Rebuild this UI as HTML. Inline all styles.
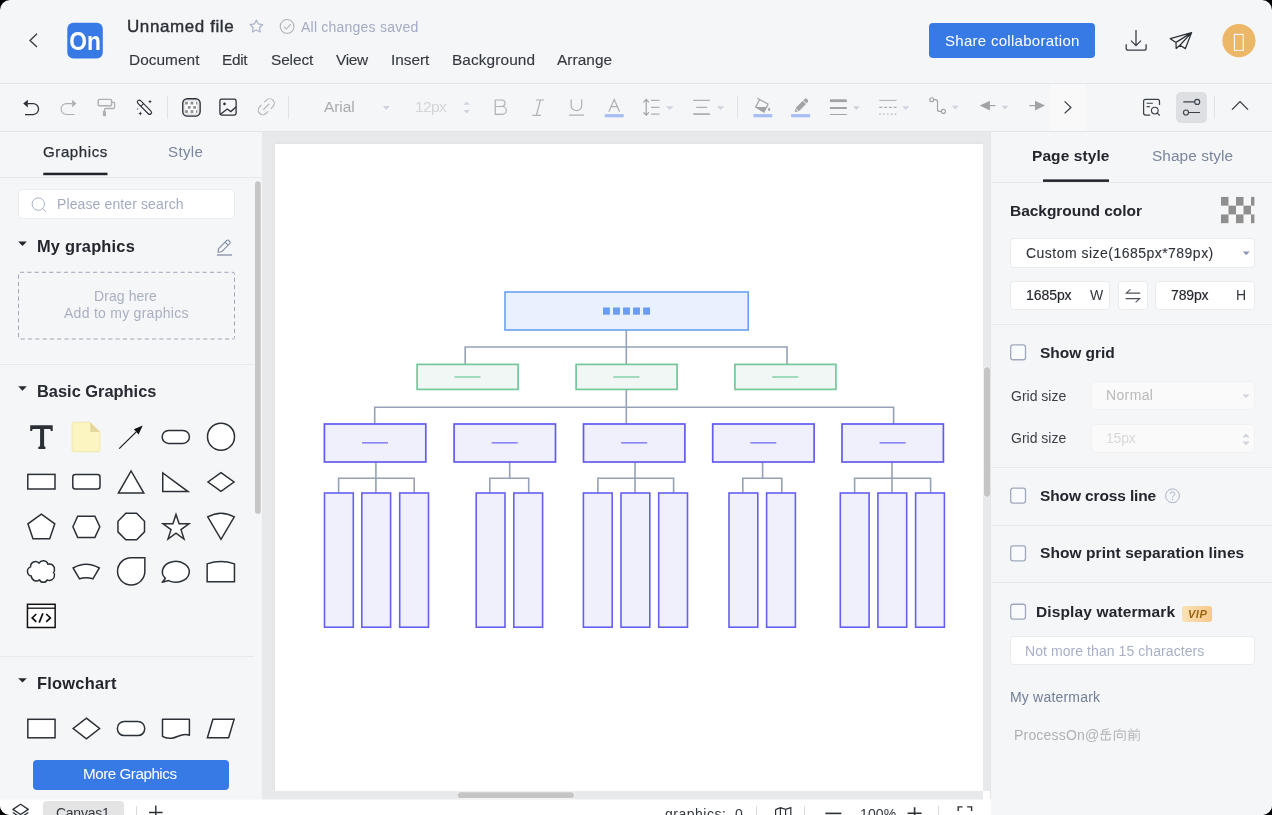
<!DOCTYPE html>
<html>
<head>
<meta charset="utf-8">
<title>Unnamed file</title>
<style>
*{box-sizing:border-box;margin:0;padding:0}
html,body{width:1272px;height:815px;overflow:hidden;background:#000;}
body{font-family:"Liberation Sans",sans-serif;color:#2b2f36;}
#app{position:absolute;left:0;top:0;width:1272px;height:815px;background:#f5f6f8;border-radius:10px;overflow:hidden;}
.a{position:absolute}
.t{position:absolute;white-space:pre;line-height:1;will-change:transform;}
svg{position:absolute;left:0;top:0;overflow:visible;pointer-events:none;will-change:transform}
.hr{position:absolute;height:1px;background:#e7e9ec}
.vr{position:absolute;width:1px;background:#e0e2e5}
.box{position:absolute;background:#fff;border:1px solid #e9ebef;border-radius:4px}
.cb{position:absolute;width:16px;height:16px;border:1px solid #98a2bc;border-radius:3px;background:#f9fafc}

</style>
</head>
<body>
<div id="app">
<!--HEADER--><div class="hr" style="left:0;top:83px;width:1272px;background:#e3e5e9"></div><svg width="1272" height="84"><rect x="67.3" y="22.8" width="35.5" height="35.6" rx="6" fill="#377ae6"/><text x="69.2" y="49.9" font-family="Liberation Sans" font-weight="700" font-size="26" fill="#fff" textLength="31.6" lengthAdjust="spacingAndGlyphs">On</text><path d="M37,33.8 L30,40.4 L37,47" fill="none" stroke="#3a3d44" stroke-width="1.35"/><path d="M256.35,20.20 L258.32,23.99 L262.53,24.69 L259.54,27.74 L260.17,31.96 L256.35,30.05 L252.53,31.96 L253.16,27.74 L250.17,24.69 L254.38,23.99 Z" fill="none" stroke="#aab3cc" stroke-width="1.25" stroke-linejoin="round"/><circle cx="287.1" cy="26.4" r="6.9" fill="none" stroke="#b0b1b5" stroke-width="1.05"/><path d="M283.9,26.6 L286.3,29.0 L290.8,24.2" fill="none" stroke="#b0b1b5" stroke-width="1.05"/><path d="M1136,30.1 V45.4 M1131,40.6 L1136,45.6 L1141,40.6" fill="none" stroke="#3a4048" stroke-width="1.3"/><path d="M1126.2,44.2 V48.2 a2,2 0 0 0 2,2 H1144.1 a2,2 0 0 0 2,-2 V44.2" fill="none" stroke="#3a4048" stroke-width="1.3"/><path d="M1191.6,32.6 L1170.3,38.7 L1176,42.4 L1176.2,48.5 L1179.9,45.2 L1185.4,48.6 Z M1176,42.4 L1191.6,32.6 L1179.9,45.2" fill="none" stroke="#2b2f36" stroke-width="1.25" stroke-linejoin="round"/><circle cx="1238.9" cy="40.6" r="16.6" fill="#ecb867"/><rect x="1234.4" y="34.4" width="8.8" height="16" fill="none" stroke="#fff" stroke-width="1"/></svg><div class="t" style="left:126.60px;top:18.21px;font-size:17px;letter-spacing:0.590px;color:#2b2f36;font-weight:400;font-style:normal;-webkit-text-stroke:0.4px #2b2f36;">Unnamed file</div><div class="t" style="left:301.00px;top:20.25px;font-size:14px;letter-spacing:0.222px;color:#a3abc3;font-weight:400;font-style:normal;">All changes saved</div><div class="t" style="left:128.70px;top:51.56px;font-size:15.4px;letter-spacing:0.047px;color:#33373e;font-weight:400;font-style:normal;-webkit-text-stroke:0.12px #33373e;">Document</div><div class="t" style="left:221.90px;top:51.56px;font-size:15.4px;letter-spacing:-0.315px;color:#33373e;font-weight:400;font-style:normal;-webkit-text-stroke:0.12px #33373e;">Edit</div><div class="t" style="left:271.00px;top:51.56px;font-size:15.4px;letter-spacing:-0.100px;color:#33373e;font-weight:400;font-style:normal;-webkit-text-stroke:0.12px #33373e;">Select</div><div class="t" style="left:336.00px;top:51.56px;font-size:15.4px;letter-spacing:-0.322px;color:#33373e;font-weight:400;font-style:normal;-webkit-text-stroke:0.12px #33373e;">View</div><div class="t" style="left:391.00px;top:51.56px;font-size:15.4px;letter-spacing:-0.043px;color:#33373e;font-weight:400;font-style:normal;-webkit-text-stroke:0.12px #33373e;">Insert</div><div class="t" style="left:452.00px;top:51.56px;font-size:15.4px;letter-spacing:0.102px;color:#33373e;font-weight:400;font-style:normal;-webkit-text-stroke:0.12px #33373e;">Background</div><div class="t" style="left:557.00px;top:51.56px;font-size:15.4px;letter-spacing:0.051px;color:#33373e;font-weight:400;font-style:normal;-webkit-text-stroke:0.12px #33373e;">Arrange</div><div class="a" style="left:929.2px;top:23px;width:165.4px;height:35.3px;border-radius:4px;background:#377ae6"></div><div class="t" style="left:945.00px;top:32.90px;font-size:15px;letter-spacing:0.283px;color:#fff;font-weight:400;font-style:normal;">Share collaboration</div><!--TOOLBAR--><div class="a" style="left:1050px;top:84px;width:35.7px;height:47px;background:#f9f9fa"></div><div class="hr" style="left:0;top:131px;width:1272px;background:#e3e5e9"></div><div class="vr" style="left:166.6px;top:96px;height:23px"></div><div class="vr" style="left:288px;top:96px;height:23px"></div><div class="vr" style="left:737px;top:96px;height:23px"></div><div class="vr" style="left:1213.8px;top:96px;height:23px"></div><div class="a" style="left:1176.4px;top:92px;width:30.5px;height:30.8px;border-radius:5px;background:#dedfe3"></div><svg width="1272" height="132"><path d="M27.4,103.6 H33.1 a5.45,5.45 0 0 1 0,10.9 H25" fill="none" stroke="#2b2f36" stroke-width="1.25"/><path d="M23.2,103.6 L27.8,99.7 V107.5 Z" fill="#2b2f36"/><path d="M72.6,103.6 H66.5 a5.45,5.45 0 0 0 0,10.9 H74.6" fill="none" stroke="#afb0b2" stroke-width="1.15"/><path d="M76.4,103.6 L72.2,99.7 V107.5 Z" fill="#afb0b2"/><rect x="98.2" y="99.4" width="13.4" height="6.3" rx="1" fill="none" stroke="#afb0b2" stroke-width="1.4"/><path d="M111.6,102.4 H113.4 a1.2,1.2 0 0 1 1.2,1.2 V107 a1.5,1.5 0 0 1 -1.5,1.5 H105.8 a1.4,1.4 0 0 0 -1.4,1.4 V111" fill="none" stroke="#afb0b2" stroke-width="1.3"/><rect x="102.9" y="111" width="3.1" height="5.2" rx="0.6" fill="#afb0b2"/><g transform="rotate(45 144.7 107.4)"><rect x="135.2" y="105.55" width="18.4" height="3.8" rx="1.9" fill="none" stroke="#2b2f36" stroke-width="1.15"/><path d="M141.2,105.55 V109.35" stroke="#2b2f36" stroke-width="1.1"/></g><path d="M150,99.69999999999999 L150.532,101.068 L151.9,101.6 L150.532,102.13199999999999 L150,103.5 L149.468,102.13199999999999 L148.1,101.6 L149.468,101.068 Z" fill="#2b2f36"/><path d="M140.3,111.3 L140.91600000000003,112.884 L142.5,113.5 L140.91600000000003,114.116 L140.3,115.7 L139.684,114.116 L138.10000000000002,113.5 L139.684,112.884 Z" fill="#2b2f36"/><path d="M137.5,108.0 L137.78,108.72 L138.5,109.0 L137.78,109.28 L137.5,110.0 L137.22,109.28 L136.5,109.0 L137.22,108.72 Z" fill="#2b2f36"/><rect x="182.75" y="98.75" width="17.4" height="17.4" rx="4.6" fill="#e3e4e7"/><rect x="185.2" y="101.4" width="11.9" height="11.9" fill="#fbfbfb"/><rect x="185.20" y="101.8" width="2.70" height="2.7" fill="#8e8e8e"/><rect x="190.60" y="101.8" width="2.70" height="2.7" fill="#8e8e8e"/><rect x="196.00" y="101.8" width="1.10" height="2.7" fill="#8e8e8e"/><rect x="187.90" y="106.0" width="2.70" height="2.7" fill="#8e8e8e"/><rect x="193.30" y="106.0" width="2.70" height="2.7" fill="#8e8e8e"/><rect x="185.20" y="110.2" width="2.70" height="2.7" fill="#8e8e8e"/><rect x="190.60" y="110.2" width="2.70" height="2.7" fill="#8e8e8e"/><rect x="196.00" y="110.2" width="1.10" height="2.7" fill="#8e8e8e"/><rect x="182.75" y="98.75" width="17.4" height="17.4" rx="4.6" fill="none" stroke="#2b2f36" stroke-width="1.35"/><rect x="219.9" y="99.2" width="16.2" height="15.9" rx="1.8" fill="none" stroke="#2b2f36" stroke-width="1.3"/><circle cx="224.5" cy="103.9" r="1.3" fill="#2b2f36"/><path d="M220.2,114.6 L227.2,109 L230.8,111.6 L236,107" fill="none" stroke="#2b2f36" stroke-width="1.3"/><g transform="translate(266.25 106.75) rotate(-45)" fill="none" stroke="#afb0b2" stroke-width="1.15" stroke-linecap="round"><path d="M2.4,-4.6 H4.8 A4.6,4.6 0 0 1 4.8,4.6 H2.4"/><path d="M-2.4,-4.6 H-4.8 A4.6,4.6 0 0 0 -4.8,4.6 H-2.4"/><path d="M-3.8,0 H3.8"/></g><path d="M495.2,100 V114.3 H502.4 a3.9,3.9 0 0 0 0,-7.8 H495.2 M495.2,100 H501.8 a3.25,3.25 0 0 1 0,6.5" fill="none" stroke="#afb0b2" stroke-width="1.2"/><path d="M536,100 H544.2 M532.4,115.3 H540.8 M540.4,100 L536.4,115.3" fill="none" stroke="#afb0b2" stroke-width="1.2"/><path d="M571.1,99.4 V105.4 a5.3,5.3 0 0 0 10.6,0 V99.4 M568.9,115.1 H583.9" fill="none" stroke="#afb0b2" stroke-width="1.2"/><path d="M608.8,111.8 L614.2,99.5 L619.6,111.8 M611.1,106.6 H617.3" fill="none" stroke="#afb0b2" stroke-width="1.2"/><rect x="604.7" y="114.1" width="19" height="3.2" fill="#a9bdf5"/><path d="M646.2,99.6 V115 M643.5,102.3 L646.2,99.4 L648.9,102.3 M643.5,112.3 L646.2,115.2 L648.9,112.3" fill="none" stroke="#a2a3a5" stroke-width="1.2"/><path d="M651,100.4 H659.5 M651,107.4 H659.5 M651,114.1 H659.5" stroke="#afb0b2" stroke-width="1.4"/><path d="M666,106.3 H673.4 L669.7,110 Z" fill="#d0d3dd"/><path d="M693.2,100.4 H709.9 M696.2,107.4 H707.2" stroke="#afb0b2" stroke-width="1.2"/><path d="M693.2,114.1 H709.9" stroke="#afb0b2" stroke-width="1.8"/><path d="M716.8,106.3 H724.2 L720.5,110 Z" fill="#d0d3dd"/><path d="M757.3,98.2 L768.4,104.3 M759.6,99.7 L755.6,107.1 L763.8,112.1 L768.1,104.4" fill="none" stroke="#a2a3a5" stroke-width="1.2" stroke-linejoin="round"/><path d="M755.4,107 H766.7 L763.9,112.4 Z" fill="#a2a3a5"/><path d="M769.1,107.3 q1.3,1.7 1.15,2.5 a1.15,1.15 0 0 1 -2.3,0 q-0.1,-0.8 1.15,-2.5 Z" fill="#a2a3a5"/><rect x="753.3" y="114.1" width="19" height="3.2" fill="#a9bdf5"/><g transform="translate(794.8 112) rotate(-45)" fill="#a2a3a5"><path d="M0,0 L2.7,-1.9 V1.9 Z"/><rect x="3.5" y="-2.3" width="10" height="4.6"/><path d="M14.3,-2.3 H15.6 a2.3,2.3 0 0 1 0,4.6 H14.3 Z"/></g><rect x="791.1" y="114.1" width="19" height="3.2" fill="#a9bdf5"/><rect x="829.9" y="99.3" width="16.9" height="2.8" fill="#a2a3a5"/><rect x="829.9" y="107" width="16.9" height="2" fill="#a2a3a5"/><rect x="829.9" y="114" width="16.9" height="1" fill="#a2a3a5"/><path d="M852.9,106.3 H859.8 L856.3499999999999,110 Z" fill="#d0d3dd"/><path d="M879.3,100.4 H896.6" stroke="#afb0b2" stroke-width="1"/><path d="M879.3,107.4 H896.6" stroke="#afb0b2" stroke-width="1.2" stroke-dasharray="3,1.8"/><path d="M879.3,114.1 H896.6" stroke="#afb0b2" stroke-width="1.2" stroke-dasharray="1.4,2.5"/><path d="M902.3,106.3 H909.3 L905.8,110 Z" fill="#d0d3dd"/><circle cx="931.7" cy="99.7" r="2" fill="none" stroke="#a2a3a5" stroke-width="1.1"/><circle cx="943.4" cy="111.4" r="2" fill="none" stroke="#a2a3a5" stroke-width="1.1"/><path d="M933.7,99.7 H935.5 a2,2 0 0 1 2,2 V109.4 a2,2 0 0 0 2,2 H941.4" fill="none" stroke="#a2a3a5" stroke-width="1.2"/><path d="M951.8,105.8 H958.8 L955.3,109.4 Z" fill="#d0d3dd"/><path d="M979.8,105.6 L989.9,100.7 V110.5 Z" fill="#a2a3a5"/><path d="M989,105.6 H995.5" stroke="#a2a3a5" stroke-width="1.2"/><path d="M1001.6,105.8 H1008.2 L1004.9000000000001,109.4 Z" fill="#d0d3dd"/><path d="M1045,105.6 L1035,100.7 V110.5 Z" fill="#a2a3a5"/><path d="M1029.2,105.6 H1036" stroke="#a2a3a5" stroke-width="1.2"/><path d="M1064.6,101.4 L1070.9,107.4 L1064.6,113.4" fill="none" stroke="#33373e" stroke-width="1.25"/><path d="M1150.2,115 H1145.6 a2,2 0 0 1 -2,-2 V101.3 a2,2 0 0 1 2,-2 H1157.5 a2,2 0 0 1 2,2 V105" fill="none" stroke="#3a4048" stroke-width="1.25"/><path d="M1146.6,103.3 H1152.8 M1146.6,106.6 H1149.8" stroke="#3a4048" stroke-width="1.1"/><circle cx="1154.8" cy="110.6" r="3.35" fill="none" stroke="#3a4048" stroke-width="1.15"/><path d="M1157.3,113.1 L1159.7,115.5" stroke="#3a4048" stroke-width="1.2"/><path d="M1183.3,101.9 H1194.6 M1188.6,112.5 H1200" stroke="#3a4048" stroke-width="1.15"/><circle cx="1197.2" cy="101.9" r="2.5" fill="none" stroke="#3a4048" stroke-width="1.15"/><circle cx="1186" cy="112.5" r="2.5" fill="none" stroke="#3a4048" stroke-width="1.15"/><path d="M1232,109.6 L1240,101.6 L1248,109.6" fill="none" stroke="#33373e" stroke-width="1.25"/><path d="M382.9,106 H389.8 L386.35,110 Z" fill="#d0d3dd"/><path d="M463.5,104.7 H469.8 L466.65,101.4 Z M463.5,110 H469.8 L466.65,113.4 Z" fill="#d0d3dd"/></svg><div class="t" style="left:323.90px;top:98.98px;font-size:15.5px;letter-spacing:-0.091px;color:#aaabad;font-weight:400;font-style:normal;">Arial</div><div class="t" style="left:414.60px;top:98.98px;font-size:15.5px;letter-spacing:-0.620px;color:#d3d5d9;font-weight:400;font-style:normal;">12px</div><!--LEFT--><div class="t" style="left:43.30px;top:143.90px;font-size:15px;letter-spacing:0.611px;color:#2b2f36;font-weight:400;font-style:normal;-webkit-text-stroke:0.25px #2b2f36;">Graphics</div><div class="t" style="left:168.20px;top:143.90px;font-size:15px;letter-spacing:0.374px;color:#7a869c;font-weight:400;font-style:normal;">Style</div><svg width="262" height="200"><rect x="43.3" y="172.7" width="64.2" height="2.5" fill="#20232a"/></svg><div class="hr" style="left:0;top:177px;width:262px"></div><svg width="262" height="815"><rect x="254.4" y="180.6" width="7" height="333.8" rx="3.5" fill="#f9f9fa"/><rect x="255" y="181.2" width="5.8" height="332.6" rx="2.9" fill="#c5c5c5"/></svg><div class="box" style="left:18.4px;top:189px;width:216.2px;height:30.4px"></div><div class="t" style="left:56.50px;top:196.85px;font-size:14px;letter-spacing:0.115px;color:#a3abc1;font-weight:400;font-style:normal;">Please enter search</div><div class="t" style="left:36.60px;top:237.62px;font-size:16.4px;letter-spacing:0.218px;color:#23262d;font-weight:700;font-style:normal;">My graphics</div><div class="t" style="left:36.60px;top:383.02px;font-size:16.4px;letter-spacing:0.005px;color:#262a31;font-weight:700;font-style:normal;">Basic Graphics</div><div class="t" style="left:37.30px;top:675.22px;font-size:16.4px;letter-spacing:0.256px;color:#23262d;font-weight:700;font-style:normal;">Flowchart</div><svg width="262" height="400"><rect x="18.5" y="272.3" width="216" height="66.7" rx="1.5" fill="none" stroke="#9ea7ba" stroke-width="1" stroke-dasharray="4.2,3.1"/></svg><div class="t" style="left:94.40px;top:288.95px;font-size:14px;letter-spacing:0.079px;color:#a9afc1;font-weight:400;font-style:normal;">Drag here</div><div class="t" style="left:64.20px;top:306.35px;font-size:14px;letter-spacing:0.269px;color:#a9afc1;font-weight:400;font-style:normal;">Add to my graphics</div><div class="hr" style="left:0;top:364px;width:254px"></div><div class="hr" style="left:0;top:656px;width:254px"></div><div class="a" style="left:32.6px;top:759.6px;width:196px;height:30.2px;border-radius:4px;background:#377ae6"></div><div class="t" style="left:82.80px;top:766.33px;font-size:15.2px;letter-spacing:-0.467px;color:#fff;font-weight:400;font-style:normal;">More Graphics</div><svg width="262" height="815"><circle cx="38.3" cy="204.1" r="6.2" fill="none" stroke="#a9b1c8" stroke-width="1"/><path d="M42.8,208.6 L45.8,211.7" stroke="#a9b1c8" stroke-width="1"/><path d="M18.2,241.5 H26.8 L22.5,245.9 Z" fill="#23262d"/><path d="M18.2,386.3 H26.8 L22.5,390.7 Z" fill="#262a31"/><path d="M18.2,678.2 H26.8 L22.5,682.6 Z" fill="#23262d"/><g transform="translate(218.0 252.3) rotate(-45)" fill="none" stroke="#7b879f" stroke-width="1.05" stroke-linejoin="round"><path d="M0,0 L2.8,-2.15 H14.6 a1.3,1.3 0 0 1 1.3,1.3 V0.85 a1.3,1.3 0 0 1 -1.3,1.3 H2.8 Z M12.2,-2.15 V2.15"/></g><path d="M216.9,255 H232.1" stroke="#7b879f" stroke-width="1.2"/><path d="M30.2,425.2 H52.7 V430.9 H50.8 L50.3,428.9 H44.1 V445.4 Q44.3,446.7 45.4,447.1 V448.9 H38.3 V447.1 Q39.9,446.7 40.1,445.4 V428.9 H32.6 L32.1,430.9 H30.2 Z" fill="#2b2f36"/><path d="M73.7,422.3 H90.2 L99.9,432 V450.2 a1.5,1.5 0 0 1 -1.5,1.5 H73.7 a1.5,1.5 0 0 1 -1.5,-1.5 V423.8 a1.5,1.5 0 0 1 1.5,-1.5 Z" fill="#fdf5c1" stroke="#f0e5a4" stroke-width="0.9"/><path d="M90.2,422.3 L99.9,432 H90.2 Z" fill="#e4d79d"/><path d="M119.2,448.7 L136.5,431.7" stroke="#111" stroke-width="1.1"/><path d="M142.7,425.6 L138.6,434.6 L133.9,429.3 Z" fill="#111"/><rect x="162.2" y="430.4" width="27.2" height="13" rx="6.5" fill="#fff" stroke="#2b2f36" stroke-width="1.5" stroke-linejoin="miter"/><circle cx="221" cy="436.7" r="13.5" fill="#fff" stroke="#2b2f36" stroke-width="1.5" stroke-linejoin="miter"/><rect x="27.8" y="474.4" width="27.2" height="14.6" fill="#fff" stroke="#2b2f36" stroke-width="1.5" stroke-linejoin="miter"/><rect x="72.8" y="474.4" width="27.2" height="14.6" rx="2.5" fill="#fff" stroke="#2b2f36" stroke-width="1.5" stroke-linejoin="miter"/><path d="M131.1,471.0 L143.8,493.1 H118.4 Z" fill="#fff" stroke="#2b2f36" stroke-width="1.5" stroke-linejoin="miter"/><path d="M162.75,473.0 V491.6 H188.0 Z" fill="#fff" stroke="#2b2f36" stroke-width="1.5" stroke-linejoin="miter"/><path d="M221,472.7 L234.0,482 L221,491.3 L208.0,482 Z" fill="#fff" stroke="#2b2f36" stroke-width="1.5" stroke-linejoin="miter"/><path d="M41.35,514.1 L54.8,523.85 L49.7,538.85 H33.0 L27.9,523.85 Z" fill="#fff" stroke="#2b2f36" stroke-width="1.5" stroke-linejoin="miter"/><path d="M72.9,526.8 L77.7,516.3 H94.9 L99.8,526.8 L94.9,537.4 H77.7 Z" fill="#fff" stroke="#2b2f36" stroke-width="1.5" stroke-linejoin="miter"/><path d="M125.8,513.3 H136.6 L144.5,521.2 V531.9 L136.6,539.7 H125.8 L117.95,531.9 V521.2 Z" fill="#fff" stroke="#2b2f36" stroke-width="1.5" stroke-linejoin="miter"/><path d="M176.00,514.40 L179.09,523.75 L188.93,523.80 L180.99,529.62 L183.99,539.00 L176.00,533.25 L168.01,539.00 L171.01,529.62 L163.07,523.80 L172.91,523.75 Z" fill="#fff" stroke="#2b2f36" stroke-width="1.5" stroke-linejoin="miter"/><path d="M207.7,516.9 Q221,509.4 234.3,516.9 L221,539.3 Z" fill="#fff" stroke="#2b2f36" stroke-width="1.5" stroke-linejoin="miter"/><path d="M30.6,566.9 A4.9,4.9 0 0 1 39.1,563.2 A4.85,4.85 0 0 1 47.95,564.2 A5,5 0 0 1 54.4,569.7 A2.8,2.8 0 0 1 53.5,572.5 A2.8,2.8 0 0 1 54.4,575.4 A4.95,4.95 0 0 1 47.2,579.9 A4.25,4.25 0 0 1 39.5,579.9 A5.05,5.05 0 0 1 31.3,576.1 A4.8,4.8 0 0 1 30.6,566.9 Z" fill="#fff" stroke="#2b2f36" stroke-width="1.5" stroke-linejoin="round"/><path d="M73.1,568.0 Q86.2,560.3 99.3,568.0 L92.9,578.8 Q86.2,576.5 79.5,578.8 Z" fill="#fff" stroke="#2b2f36" stroke-width="1.5" stroke-linejoin="miter"/><path d="M131.2,557.65 H144.85 V571.3 a13.65,13.65 0 1 1 -13.65,-13.65 Z" fill="#fff" stroke="#2b2f36" stroke-width="1.5" stroke-linejoin="miter"/><path d="M165.4,578.4 A13.45,10.4 0 1 1 168.6,580.6 L162.2,582.2 Z" fill="#fff" stroke="#2b2f36" stroke-width="1.5" stroke-linejoin="round"/><path d="M207.15,563.9 Q220.8,559 234.45,563.9 V581.7 H207.15 Z" fill="#fff" stroke="#2b2f36" stroke-width="1.5" stroke-linejoin="miter"/><rect x="27.45" y="604.3" width="27.7" height="23.2" fill="#fff" stroke="#111" stroke-width="1.5"/><path d="M27.5,608.2 H55" stroke="#111" stroke-width="1.3"/><path d="M36.3,614.0 L32.2,617.9 L36.3,621.8 M46.2,614.0 L50.4,617.9 L46.2,621.8 M42.9,613.4 L39.2,622.6" fill="none" stroke="#111" stroke-width="1.7"/><rect x="27.85" y="719.3" width="27.2" height="18.5" fill="#fff" stroke="#2b2f36" stroke-width="1.5" stroke-linejoin="miter"/><path d="M86.4,718.1 L99.6,728.5 L86.4,738.9 L73.2,728.5 Z" fill="#fff" stroke="#2b2f36" stroke-width="1.5" stroke-linejoin="miter"/><rect x="117.4" y="721.6" width="27.3" height="14" rx="6.8" fill="#fff" stroke="#2b2f36" stroke-width="1.5" stroke-linejoin="miter"/><path d="M162.5,719.3 H189.4 V735.2 C182,732.2 178,737.6 171.5,738.2 C167,738.6 164,737.4 162.5,736.4 Z" fill="#fff" stroke="#2b2f36" stroke-width="1.5" stroke-linejoin="round"/><path d="M212.9,719.35 H234.1 L228.6,737.7 H207.4 Z" fill="#fff" stroke="#2b2f36" stroke-width="1.5" stroke-linejoin="miter"/></svg><!--CANVAS--><div class="a" style="left:262px;top:132px;width:728px;height:667px;background:#e8e9eb"></div><div class="a" style="left:275px;top:144px;width:708px;height:647px;background:#fff;box-shadow:0 0 5px rgba(0,0,0,0.05)"></div><div class="a" style="left:983px;top:132px;width:7px;height:659px;background:#e8e9eb"></div><div class="a" style="left:262px;top:791px;width:721px;height:8px;background:#e8e9eb"></div><div class="a" style="left:983px;top:791px;width:8px;height:8px;background:#fff"></div><svg width="1272" height="815"><rect x="983.4" y="366.6" width="7.1" height="130.8" rx="3.55" fill="#f6f6f6"/><rect x="984" y="367.3" width="6" height="129.4" rx="3" fill="#c5c5c5"/></svg><svg width="1272" height="815"><rect x="456.8" y="791.5" width="118" height="7.3" rx="3.65" fill="#f6f6f6"/><rect x="457.6" y="792.3" width="116.4" height="5.8" rx="2.9" fill="#c5c5c5"/></svg><svg width="1272" height="815"><g fill="none" stroke="#95a1b5" stroke-width="1.6"><path d="M626.3,330 V347 M465.2,364 V347 H787 V364 M626.3,347 V364"/><path d="M626.3,389.5 V424 M374.7,424 V407.3 H893.6 V424"/><path d="M375.9,462 V493 M338.6,493 V478.3 H414.2 V493"/><path d="M509.7,462 V478.3 M489.8,493 V478.3 H528.7 V493"/><path d="M635,462 V493 M597.9,493 V478.3 H673.6 V493"/><path d="M762.6,462 V478.3 M742.8,493 V478.3 H781.8 V493"/><path d="M892,462 V493 M854.6,493 V478.3 H930.6 V493"/></g><rect x="505" y="292" width="243.2" height="38" fill="#e9f0fe" stroke="#6aa0f2" stroke-width="1.6"/><rect x="603.00" y="307.5" width="6.9" height="7.2" fill="#6b9cf3"/><rect x="613.03" y="307.5" width="6.9" height="7.2" fill="#6b9cf3"/><rect x="623.06" y="307.5" width="6.9" height="7.2" fill="#6b9cf3"/><rect x="633.09" y="307.5" width="6.9" height="7.2" fill="#6b9cf3"/><rect x="643.12" y="307.5" width="6.9" height="7.2" fill="#6b9cf3"/><rect x="417.1" y="364.4" width="101" height="25" fill="#f1f7f5" stroke="#74c79b" stroke-width="1.7"/><path d="M454.40000000000003,377 H480.5" stroke="#86d0a8" stroke-width="1.5"/><rect x="576.1" y="364.4" width="101" height="25" fill="#f1f7f5" stroke="#74c79b" stroke-width="1.7"/><path d="M613.4,377 H639.5" stroke="#86d0a8" stroke-width="1.5"/><rect x="734.9" y="364.4" width="101" height="25" fill="#f1f7f5" stroke="#74c79b" stroke-width="1.7"/><path d="M772.1999999999999,377 H798.3" stroke="#86d0a8" stroke-width="1.5"/><rect x="324.4" y="424" width="101.4" height="38" fill="#f0f0fd" stroke="#635bf0" stroke-width="1.7"/><path d="M362.0,442.8 H388.0" stroke="#8a84f5" stroke-width="1.6"/><rect x="454.1" y="424" width="101.4" height="38" fill="#f0f0fd" stroke="#635bf0" stroke-width="1.7"/><path d="M491.70000000000005,442.8 H517.7" stroke="#8a84f5" stroke-width="1.6"/><rect x="583.5" y="424" width="101.4" height="38" fill="#f0f0fd" stroke="#635bf0" stroke-width="1.7"/><path d="M621.1,442.8 H647.1" stroke="#8a84f5" stroke-width="1.6"/><rect x="712.7" y="424" width="101.4" height="38" fill="#f0f0fd" stroke="#635bf0" stroke-width="1.7"/><path d="M750.3000000000001,442.8 H776.3000000000001" stroke="#8a84f5" stroke-width="1.6"/><rect x="842" y="424" width="101.4" height="38" fill="#f0f0fd" stroke="#635bf0" stroke-width="1.7"/><path d="M879.6,442.8 H905.6" stroke="#8a84f5" stroke-width="1.6"/><rect x="324.5" y="493" width="28.8" height="134.2" fill="#f0f0fd" stroke="#665ff2" stroke-width="1.6"/><rect x="361.8" y="493" width="28.8" height="134.2" fill="#f0f0fd" stroke="#665ff2" stroke-width="1.6"/><rect x="399.7" y="493" width="28.8" height="134.2" fill="#f0f0fd" stroke="#665ff2" stroke-width="1.6"/><rect x="476.2" y="493" width="28.8" height="134.2" fill="#f0f0fd" stroke="#665ff2" stroke-width="1.6"/><rect x="513.8000000000001" y="493" width="28.8" height="134.2" fill="#f0f0fd" stroke="#665ff2" stroke-width="1.6"/><rect x="583.4000000000001" y="493" width="28.8" height="134.2" fill="#f0f0fd" stroke="#665ff2" stroke-width="1.6"/><rect x="621.0" y="493" width="28.8" height="134.2" fill="#f0f0fd" stroke="#665ff2" stroke-width="1.6"/><rect x="658.7" y="493" width="28.8" height="134.2" fill="#f0f0fd" stroke="#665ff2" stroke-width="1.6"/><rect x="729.0" y="493" width="28.8" height="134.2" fill="#f0f0fd" stroke="#665ff2" stroke-width="1.6"/><rect x="766.6" y="493" width="28.8" height="134.2" fill="#f0f0fd" stroke="#665ff2" stroke-width="1.6"/><rect x="840.3000000000001" y="493" width="28.8" height="134.2" fill="#f0f0fd" stroke="#665ff2" stroke-width="1.6"/><rect x="877.9000000000001" y="493" width="28.8" height="134.2" fill="#f0f0fd" stroke="#665ff2" stroke-width="1.6"/><rect x="915.6" y="493" width="28.8" height="134.2" fill="#f0f0fd" stroke="#665ff2" stroke-width="1.6"/></svg><!--RIGHT--><div class="a" style="left:990px;top:132px;width:282px;height:683px;background:#f5f6f8;border-left:1px solid #e3e5e9"></div><div class="t" style="left:1031.80px;top:147.78px;font-size:15.5px;letter-spacing:0.082px;color:#23262d;font-weight:700;font-style:normal;">Page style</div><div class="t" style="left:1151.80px;top:147.86px;font-size:15.4px;letter-spacing:0.063px;color:#7a869c;font-weight:400;font-style:normal;">Shape style</div><svg width="1272" height="200"><rect x="1043" y="179.4" width="66" height="2.5" fill="#20232a"/></svg><div class="hr" style="left:991px;top:182px;width:281px"></div><div class="t" style="left:1009.80px;top:202.58px;font-size:15.5px;letter-spacing:-0.040px;color:#23262d;font-weight:700;font-style:normal;">Background color</div><div class="box" style="left:1010.4px;top:238px;width:244.4px;height:29.9px"></div><div class="t" style="left:1025.80px;top:246.15px;font-size:14px;letter-spacing:0.475px;color:#2f333a;font-weight:400;font-style:normal;-webkit-text-stroke:0.1px #2f333a;">Custom size(1685px*789px)</div><div class="box" style="left:1010.4px;top:280.6px;width:99.3px;height:29.8px"></div><div class="box" style="left:1117.8px;top:280.6px;width:29.8px;height:29.8px"></div><div class="box" style="left:1155.4px;top:280.6px;width:99.4px;height:29.8px"></div><div class="t" style="left:1025.60px;top:287.85px;font-size:14px;letter-spacing:-0.066px;color:#23262d;font-weight:400;font-style:normal;-webkit-text-stroke:0.15px #23262d;">1685px</div><div class="t" style="left:1089.90px;top:287.85px;font-size:14px;letter-spacing:-1.200px;color:#33373e;font-weight:400;font-style:normal;">W</div><div class="t" style="left:1170.90px;top:287.85px;font-size:14px;letter-spacing:-0.136px;color:#23262d;font-weight:400;font-style:normal;-webkit-text-stroke:0.15px #23262d;">789px</div><div class="t" style="left:1235.90px;top:287.85px;font-size:14px;letter-spacing:0.600px;color:#33373e;font-weight:400;font-style:normal;">H</div><div class="hr" style="left:991px;top:324px;width:281px"></div><svg width="1272" height="815"><rect x="1010.7" y="344.85" width="14.8" height="14.9" rx="2.3" fill="#f9fafc" stroke="#a0a8bd" stroke-width="1.3"/></svg><div class="t" style="left:1040.20px;top:344.78px;font-size:15.5px;letter-spacing:-0.030px;color:#23262d;font-weight:700;font-style:normal;">Show grid</div><div class="t" style="left:1010.60px;top:388.65px;font-size:14px;letter-spacing:0.006px;color:#3a3e46;font-weight:400;font-style:normal;">Grid size</div><div class="t" style="left:1010.60px;top:431.45px;font-size:14px;letter-spacing:0.006px;color:#3a3e46;font-weight:400;font-style:normal;">Grid size</div><div class="box" style="left:1091px;top:381.4px;width:163.8px;height:28.6px;background:#fafafa;border-color:#f0f1f3"></div><div class="box" style="left:1091px;top:423.6px;width:163.8px;height:29.2px;background:#fafafa;border-color:#f0f1f3"></div><div class="t" style="left:1105.50px;top:388.45px;font-size:14px;letter-spacing:0.359px;color:#b9babc;font-weight:400;font-style:normal;">Normal</div><div class="t" style="left:1106.00px;top:431.35px;font-size:14px;letter-spacing:-0.186px;color:#d7d8da;font-weight:400;font-style:normal;">15px</div><div class="hr" style="left:991px;top:467px;width:281px"></div><svg width="1272" height="815"><rect x="1010.7" y="488.15" width="14.8" height="14.9" rx="2.3" fill="#f9fafc" stroke="#a0a8bd" stroke-width="1.3"/></svg><div class="t" style="left:1040.20px;top:487.68px;font-size:15.5px;letter-spacing:-0.128px;color:#23262d;font-weight:700;font-style:normal;">Show cross line</div><div class="hr" style="left:991px;top:525px;width:281px"></div><svg width="1272" height="815"><rect x="1010.7" y="545.95" width="14.8" height="14.9" rx="2.3" fill="#f9fafc" stroke="#a0a8bd" stroke-width="1.3"/></svg><div class="t" style="left:1040.20px;top:545.28px;font-size:15.5px;letter-spacing:0.070px;color:#23262d;font-weight:700;font-style:normal;">Show print separation lines</div><div class="hr" style="left:991px;top:582px;width:281px"></div><svg width="1272" height="815"><rect x="1010.7" y="604.25" width="14.8" height="14.9" rx="2.3" fill="#f9fafc" stroke="#a0a8bd" stroke-width="1.3"/></svg><div class="t" style="left:1036.00px;top:604.18px;font-size:15.5px;letter-spacing:0.127px;color:#23262d;font-weight:700;font-style:normal;">Display watermark</div><div class="a" style="left:1182.2px;top:606px;width:29.6px;height:16.2px;border-radius:3px;background:linear-gradient(90deg,#fbe2b6,#f6c98a)"></div><div class="t" style="left:1187.60px;top:608.79px;font-size:11px;letter-spacing:0.503px;color:#9a6316;font-weight:700;font-style:italic;">VIP</div><div class="box" style="left:1010.4px;top:636px;width:244.4px;height:29.2px"></div><div class="t" style="left:1024.90px;top:643.65px;font-size:14px;letter-spacing:0.072px;color:#a8b0c6;font-weight:400;font-style:normal;">Not more than 15 characters</div><div class="t" style="left:1009.90px;top:689.65px;font-size:14px;letter-spacing:0.191px;color:#727e94;font-weight:400;font-style:normal;">My watermark</div><div class="t" style="left:1014.40px;top:727.55px;font-size:14px;letter-spacing:0.195px;color:#b0b1b3;font-weight:400;font-style:normal;">ProcessOn@</div><svg width="1272" height="815"><rect x="1221" y="196.9" width="33.4" height="26.3" fill="#f7f7f7"/><rect x="1221.00" y="196.90" width="7.50" height="8.77" fill="#8f8f8f"/><rect x="1236.00" y="196.90" width="7.50" height="8.77" fill="#8f8f8f"/><rect x="1251.00" y="196.90" width="3.40" height="8.77" fill="#8f8f8f"/><rect x="1228.50" y="205.67" width="7.50" height="8.77" fill="#8f8f8f"/><rect x="1243.50" y="205.67" width="7.50" height="8.77" fill="#8f8f8f"/><rect x="1221.00" y="214.44" width="7.50" height="8.76" fill="#8f8f8f"/><rect x="1236.00" y="214.44" width="7.50" height="8.76" fill="#8f8f8f"/><rect x="1251.00" y="214.44" width="3.40" height="8.76" fill="#8f8f8f"/><path d="M1242.7,251.6 H1249.7 L1246.2,255.3 Z" fill="#8b97b8"/><path d="M1242.4,394.4 H1249.6 L1246,398.1 Z" fill="#d0d4dd"/><path d="M1242.4,437.2 H1249.6 L1246,433.4 Z M1242.4,441.5 H1249.6 L1246,445.2 Z" fill="#d0d4dd"/><path d="M1140.2,293.1 H1126.3 L1130.4,289.3 M1125.6,298.6 H1139.6 L1135.6,302.4" fill="none" stroke="#4c5058" stroke-width="1.1"/><circle cx="1172.5" cy="495.8" r="6.9" fill="none" stroke="#a9b1c8" stroke-width="1"/><path d="M1170.3,494 a2.2,2.2 0 1 1 3.3,1.9 q-1.1,0.6 -1.1,1.8 M1172.5,499.1 v1.2" fill="none" stroke="#a9b1c8" stroke-width="1"/><g fill="none" stroke="#b0b1b3" stroke-width="1"><path d="M1108.6,728.8 L1102.4,730.2 V734.2 M1102.4,731.9 H1109.6 M1106.6,731.9 V734.2 M1100,734.4 H1111.4 M1105.7,735.3 V740 M1101.5,736.8 V740 H1110 V736.8"/><path d="M1120.4,728.6 L1118.4,730.9 M1114.4,741 V731.1 H1125.2 V739.6 a0.8,0.8 0 0 1 -0.8,0.8 H1123.2 M1117.4,733.8 H1122.2 V737.6 H1117.4 Z"/><path d="M1130.8,728.6 L1132,730.4 M1137.2,728.6 L1136,730.4 M1127.8,731.2 H1140.2 M1129.2,741 V733.2 H1133.8 V739.8 a0.7,0.7 0 0 1 -0.7,0.7 H1132.4 M1129.2,735.6 H1133.8 M1129.2,737.9 H1133.8 M1136,733.4 V738.4 M1139.2,732.8 V739.8 a0.8,0.8 0 0 1 -0.8,0.8 H1137.2"/></g></svg><!--BOTTOM--><div class="a" style="left:0;top:799px;width:991px;height:16px;background:#fff"></div><svg width="262" height="815"><rect x="0" y="799" width="262" height="0.6" fill="#f5f6f8"/><rect x="262" y="799" width="721" height="0.5" fill="#e8e9eb"/></svg><div class="a" style="left:42.6px;top:800.8px;width:81.2px;height:20px;border-radius:4px;background:#e4e4e4"></div><div class="t" style="left:56.20px;top:806.35px;font-size:14px;letter-spacing:-0.261px;color:#33373e;font-weight:400;font-style:normal;">Canvas1</div><div class="t" style="left:665.20px;top:806.95px;font-size:14px;letter-spacing:0.501px;color:#33373e;font-weight:400;font-style:normal;">graphics:  0</div><div class="t" style="left:860.20px;top:806.95px;font-size:14px;letter-spacing:0.147px;color:#33373e;font-weight:400;font-style:normal;">100%</div><div class="vr" style="left:136px;top:806px;height:10px;background:#d8dade"></div><div class="vr" style="left:756.4px;top:806px;height:10px;background:#d8dade"></div><div class="vr" style="left:804.4px;top:806px;height:10px;background:#d8dade"></div><div class="vr" style="left:937.8px;top:806px;height:10px;background:#d8dade"></div><svg width="1272" height="815"><path d="M20.6,804.3 L28.3,809.4 L20.6,814.5 L12.9,809.4 Z M12.9,812.5 L20.6,817.6 L28.3,812.5" fill="none" stroke="#2b2f36" stroke-width="1.3" stroke-linejoin="round"/><path d="M149,812.5 H162.6 M155.8,805.6 V816" stroke="#2b2f36" stroke-width="1.4"/><path d="M775.6,809.6 L780.4,807.6 L785.6,809.4 L790.8,807.6 V816 M775.6,809.6 V816 M780.4,807.6 V816 M785.6,809.4 V816" fill="none" stroke="#2b2f36" stroke-width="1.2"/><path d="M825.4,813.4 H841.4" stroke="#2b2f36" stroke-width="1.6"/><path d="M907.6,813.2 H921.6 M914.6,807.2 V816" stroke="#2b2f36" stroke-width="1.6"/><path d="M958.2,811 V806.9 H962.6 M967.2,806.9 H971.6 V811" fill="none" stroke="#2b2f36" stroke-width="1.4"/></svg>
</div>
</body>
</html>
